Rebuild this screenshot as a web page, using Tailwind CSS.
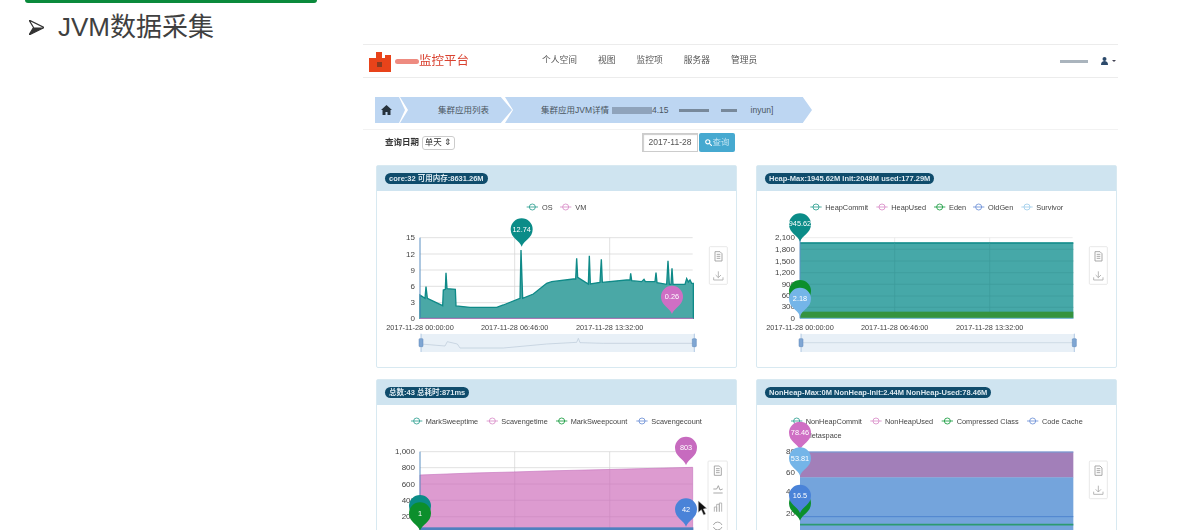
<!DOCTYPE html>
<html lang="zh">
<head>
  <meta charset="UTF-8" />
  <title>JVM数据采集</title>
  <script src="https://cdn.jsdelivr.net/npm/@tailwindcss/browser@4"></script>
</head>
<body class="bg-white h-[530px] overflow-hidden font-['Liberation_Sans','Noto_Sans_CJK_SC',sans-serif]">

  <!-- shared symbols -->
  <svg class="hidden">
    <defs>
      <path id="pin" d="M0 0C-6-18-33-25-33-52A33 33 0 1 1 33-52C33-25 6-18 0 0Z"/>
      <g id="doc" fill="none" stroke="#999" stroke-width="2.5">
        <path d="M-10-14H5L11-8V14H-10Z"/><path d="M-5-6H6M-5 0H6M-5 6H6"/>
      </g>
      <g id="down" fill="none" stroke="#aaa" stroke-width="2.5">
        <path d="M0-14V5M-8-3L0 5 8-3M-14 4V12H14V4"/>
      </g>
      <g id="handle">
        <path d="M0-27V28" stroke="#8fb0d6" stroke-width="2"/>
        <rect x="-6" y="-12" width="12" height="24" rx="2" fill="#7fa6d3" stroke="#5d86b8" stroke-width="1.5"/>
      </g>
    </defs>
  </svg>

  <div class="ml-[25px] w-[292px] h-[3px] rounded-b-full bg-[#0a8a3c]"></div>

  <div class="h-[41px] pt-[7px] flex items-center pl-[29px] text-[#404040]">
    <svg class="w-[15px] h-[15px]" viewBox="0 0 15 15"><path d="M0 0L15 7.5 0 15 4.5 7.5Z" fill="#fff" stroke="#333" stroke-width="1.2"/><path d="M4.5 7.5H15L0 15Z" fill="#333"/></svg>
    <h1 class="ml-[14px] text-[26px] leading-none font-normal">JVM数据采集</h1>
  </div>

  <!-- embedded app screenshot -->
  <div class="ml-[363px] w-[755px] blur-[0.6px]">
    <nav class="h-[34px] border-y border-[#ececec] flex items-center text-[8.75px] text-[#555]">
      <svg class="ml-[6px] w-[22px] h-[22px]" viewBox="0 0 22 22"><path d="M0 8H7V2H13V8H16V5H22V22H0Z" fill="#e8431a"/><rect x="8" y="12" width="5" height="5" fill="#8a3a20"/></svg>
      <span class="ml-[4px] w-[24px] h-[5px] bg-[#ee8b80] rounded-sm"></span>
      <span class="text-[12.5px] text-[#d9412f]">监控平台</span>
      <div class="ml-[73px] flex gap-[21px]">
        <a>个人空间</a><a>视图</a><a>监控项</a><a>服务器</a><a>管理员</a>
      </div>
      <span class="ml-auto w-[28px] h-[3px] bg-[#aab4bd]"></span>
      <svg class="ml-[13px] w-[7px] h-[8px]" viewBox="0 0 7 8"><circle cx="3.5" cy="2" r="2" fill="#2c4a6b"/><path d="M0 8C0 5 1.5 4 3.5 4S7 5 7 8Z" fill="#2c4a6b"/></svg>
      <span class="ml-[4px] mr-[2px] border-x-[2.5px] border-t-[2.5px] border-x-transparent border-t-[#445]"></span>
    </nav>

    <div class="mt-[19px] ml-[12px] h-[26px] flex text-[8.5px] text-[#4a5560]">
      <div class="w-[30px] bg-[#bdd6f2] flex items-center pl-[6px] [clip-path:polygon(0_0,80%_0,100%_50%,80%_100%,0_100%)]">
        <svg class="w-[11px] h-[10px]" viewBox="0 0 11 10"><path d="M5.5 0L11 5H9.5V10H6.5V7H4.5V10H1.5V5H0Z" fill="#26323c"/></svg>
      </div>
      <div class="w-[112px] -ml-[5px] bg-[#bdd6f2] flex items-center pl-[38px] [clip-path:polygon(0_0,90%_0,100%_50%,90%_100%,0_100%,8px_50%)]">集群应用列表</div>
      <div class="w-[307px] -ml-[7px] bg-[#bdd6f2] flex items-center pl-[36px] whitespace-nowrap [clip-path:polygon(0_0,97%_0,100%_50%,97%_100%,0_100%,8px_50%)]">
        集群应用JVM详情
        <span class="ml-[3px] w-[40px] h-[7px] bg-[#8fa3bb]"></span>
        <span>4.15</span>
        <span class="ml-[10px] w-[30px] h-[3px] bg-[#78899b]"></span>
        <span class="ml-[12px] w-[16px] h-[3px] bg-[#78899b]"></span>
        <span class="ml-[14px]">inyun]</span>
      </div>
    </div>

    <div class="mt-[6px] border-t border-[#f2f2f2]"></div>

    <div class="mt-[3px] ml-[22px] h-[19px] flex items-center text-[8.5px] text-[#333]">
      <span class="font-bold">查询日期</span>
      <span class="ml-[3px] h-[14px] w-[33px] border border-[#ccc] rounded-[3px] flex items-center justify-center">单天 ⇕</span>
      <span class="ml-[187px] h-[19px] w-[56px] border border-[#ccc] shadow-[inset_1px_1px_1px_#ccc] flex items-center justify-center text-[#555]">2017-11-28</span>
      <button class="ml-[1px] h-[19px] w-[36px] bg-[#46a9d0] rounded-[2px] text-[#bfe3f2] flex items-center justify-center gap-[1px]">
        <svg class="w-[7px] h-[7px]" viewBox="0 0 8 8" fill="none" stroke="#fff" stroke-width="1.3"><circle cx="3.2" cy="3.2" r="2.4"/><path d="M5 5L8 8"/></svg>查询
      </button>
    </div>

    <div class="mt-[13px] ml-[13px] w-[741px] grid grid-cols-[361px_361px] gap-x-[19px] gap-y-[11px]">

      <!-- core -->
      <section class="border border-[#d8e9f1] rounded-[2px]">
        <header class="h-[25px] bg-[#cfe4f0] flex items-center pl-[8px]">
          <span class="px-[4px] h-[11px] rounded-full bg-[#0f4c6c] text-[#dce9f0] text-[7.5px] font-bold leading-[11px]">core:32 可用内存:8631.26M</span>
        </header>
        <svg class="block w-[359px] h-[176px]" viewBox="21 3 1077 528" font-size="24" fill="#444">
          <circle cx="487" cy="51" r="9" fill="none" stroke="#2a9d8f" stroke-width="2.5"/><path d="M470 51h34" stroke="#2a9d8f" stroke-width="2.5"/><text x="516" y="59" font-size="22">OS</text>
          <circle cx="587" cy="51" r="9" fill="none" stroke="#d88bc8" stroke-width="2.5"/><path d="M570 51h34" stroke="#d88bc8" stroke-width="2.5"/><text x="616" y="59" font-size="22">VM</text>
          <path d="M150 143H968M150 192H968M150 240H968M150 289H968M150 338H968M434 143V385M719 143V385" stroke="#d2d2d2" stroke-width="2"/>
          <g text-anchor="end"><text x="135" y="151">15</text><text x="135" y="200">12</text><text x="135" y="248">9</text><text x="135" y="297">6</text><text x="135" y="346">3</text><text x="135" y="394">0</text></g>
          <path d="M150 315L165 325 168 290 172 325 218 347 220 300 226 298 228 248 231 296 256 298 258 348 300 352 380 352 400 345 450 325 453 180 458 325 490 312 530 280 545 275 610 267 617 267 620 205 623 262 655 282 658 197 661 282 690 277 694 208 697 277 770 270 780 270 782 250 785 272 815 275 822 268 826 275 855 275 858 248 861 278 890 283 894 212 898 283 903 283 906 235 909 283 945 283 950 266 955 276 960 270 965 280 970 280V385H150Z" fill="#4aa8a6" stroke="#0f8a88" stroke-width="4"/>
          <path d="M150 385H970" stroke="#c777c0" stroke-width="3"/><path d="M150 143V385" stroke="#5a8fc2" stroke-width="3"/>
          <g font-size="22" text-anchor="middle"><text x="150" y="420">2017-11-28 00:00:00</text><text x="434" y="420">2017-11-28 06:46:00</text><text x="719" y="420">2017-11-28 13:32:00</text></g>
          <use href="#pin" transform="translate(455 170)" fill="#0b8c88"/><text x="455" y="126" text-anchor="middle" fill="#fff" font-size="22">12.74</text>
          <use href="#pin" transform="translate(906 372)" fill="#cf6fc4"/><text x="906" y="328" text-anchor="middle" fill="#fff" font-size="22">0.26</text>
          <rect x="153" y="432" width="820" height="54" fill="#e8f0f7"/>
          <path d="M153 462L225 468 232 455 262 462 270 474 400 474 530 462 620 457 625 445 630 458 700 460 900 460 970 460" fill="none" stroke="#b9c9d8" stroke-width="2"/>
          <use href="#handle" x="153" y="458"/><use href="#handle" x="973" y="458"/>
          <rect x="1018" y="170" width="54" height="113" rx="3" fill="#fff" stroke="#ddd" stroke-width="2"/>
          <use href="#doc" x="1045" y="199"/><use href="#down" x="1045" y="258"/>
        </svg>
      </section>

      <!-- heap -->
      <section class="border border-[#d8e9f1] rounded-[2px]">
        <header class="h-[25px] bg-[#cfe4f0] flex items-center pl-[8px]">
          <span class="px-[4px] h-[11px] rounded-full bg-[#0f4c6c] text-[#dce9f0] text-[7.5px] font-bold leading-[11px]">Heap-Max:1945.62M Init:2048M used:177.29M</span>
        </header>
        <svg class="block w-[359px] h-[176px]" viewBox="21 3 1077 528" font-size="22" fill="#444">
          <g fill="none" stroke-width="2.5">
            <circle cx="198" cy="51" r="9" stroke="#2a9d8f"/><path d="M181 51h34" stroke="#2a9d8f"/>
            <circle cx="396" cy="51" r="9" stroke="#d88bc8"/><path d="M379 51h34" stroke="#d88bc8"/>
            <circle cx="569" cy="51" r="9" stroke="#149a3c"/><path d="M552 51h34" stroke="#149a3c"/>
            <circle cx="686" cy="51" r="9" stroke="#6b8fd6"/><path d="M669 51h34" stroke="#6b8fd6"/>
            <circle cx="831" cy="51" r="9" stroke="#9dcdea"/><path d="M814 51h34" stroke="#9dcdea"/>
          </g>
          <text x="226" y="59">HeapCommit</text><text x="424" y="59">HeapUsed</text><text x="597" y="59">Eden</text><text x="714" y="59">OldGen</text><text x="859" y="59">Survivor</text>
          <path d="M150 143H968M434 143V158M719 143V158" stroke="#e2e2e2" stroke-width="2"/>
          <g text-anchor="end" font-size="24"><text x="135" y="151">2,100</text><text x="135" y="186">1,800</text><text x="135" y="221">1,500</text><text x="135" y="255">1,200</text><text x="135" y="290">900</text><text x="135" y="325">600</text><text x="135" y="358">300</text><text x="135" y="394">0</text></g>
          <rect x="150" y="158" width="820" height="227" fill="#46a8a8"/>
          <path d="M150 159H970" stroke="#0f8a88" stroke-width="5"/>
          <path d="M150 178H970M150 213H970M150 248H970M150 283H970M150 318H970M150 352H970M434 158V385M719 158V385" stroke="#3d9a9a" stroke-width="2"/>
          <rect x="150" y="365" width="820" height="20" fill="#35933f"/>
          <path d="M150 385H970" stroke="#7cb8e0" stroke-width="3"/><path d="M150 143V385" stroke="#5a8fc2" stroke-width="3"/>
          <g text-anchor="middle"><text x="150" y="420">2017-11-28 00:00:00</text><text x="434" y="420">2017-11-28 06:46:00</text><text x="719" y="420">2017-11-28 13:32:00</text></g>
          <use href="#pin" transform="translate(150 155)" fill="#0b8c88"/><text x="150" y="109" text-anchor="middle" fill="#fff">945.62</text>
          <use href="#pin" transform="translate(150 355)" fill="#0c8f2c"/>
          <use href="#pin" transform="translate(150 378)" fill="#74b5e8"/><text x="150" y="333" text-anchor="middle" fill="#fff">2.18</text>
          <rect x="153" y="432" width="820" height="54" fill="#e8f0f7"/>
          <path d="M153 458H973" stroke="#c3d1de" stroke-width="2"/>
          <use href="#handle" x="153" y="458"/><use href="#handle" x="973" y="458"/>
          <rect x="1018" y="170" width="54" height="113" rx="3" fill="#fff" stroke="#ddd" stroke-width="2"/>
          <use href="#doc" x="1045" y="199"/><use href="#down" x="1045" y="258"/>
        </svg>
      </section>

      <!-- gc -->
      <section class="border border-[#d8e9f1] rounded-[2px]">
        <header class="h-[25px] bg-[#cfe4f0] flex items-center pl-[8px]">
          <span class="px-[4px] h-[11px] rounded-full bg-[#0f4c6c] text-[#dce9f0] text-[7.5px] font-bold leading-[11px]">总数:43 总耗时:871ms</span>
        </header>
        <svg class="block w-[359px] h-[176px]" viewBox="21 90 1077 528" font-size="22" fill="#444">
          <g fill="none" stroke-width="2.5">
            <circle cx="140" cy="138" r="9" stroke="#2a9d8f"/><path d="M123 138h34" stroke="#2a9d8f"/>
            <circle cx="367" cy="138" r="9" stroke="#d88bc8"/><path d="M350 138h34" stroke="#d88bc8"/>
            <circle cx="575" cy="138" r="9" stroke="#149a3c"/><path d="M558 138h34" stroke="#149a3c"/>
            <circle cx="816" cy="138" r="9" stroke="#6b8fd6"/><path d="M799 138h34" stroke="#6b8fd6"/>
          </g>
          <text x="167" y="146">MarkSweeptime</text><text x="394" y="146">Scavengetime</text><text x="602" y="146">MarkSweepcount</text><text x="844" y="146">Scavengecount</text>
          <path d="M150 230H968M150 278H968M434 230V465M719 230V465" stroke="#d2d2d2" stroke-width="2"/>
          <g text-anchor="end" font-size="24"><text x="135" y="238">1,000</text><text x="135" y="286">800</text><text x="135" y="335">600</text><text x="135" y="384">400</text><text x="135" y="433">200</text></g>
          <path d="M150 300L310 294 430 291 525 288 735 283 968 277V465H150Z" fill="#dd9bd0" stroke="#c777c0" stroke-width="2"/>
          <path d="M150 327H968M150 376H968M150 425H968M434 290V465M719 283V465" stroke="#cf8cc2" stroke-width="2"/>
          <rect x="150" y="457" width="820" height="20" fill="#4f80bf"/>
          <path d="M150 230V465" stroke="#5a8fc2" stroke-width="3"/>
          <use href="#pin" transform="translate(948 270)" fill="#c76bbf"/><text x="948" y="226" text-anchor="middle" fill="#fff">803</text>
          <use href="#pin" transform="translate(948 455)" fill="#4a83d8"/><text x="948" y="411" text-anchor="middle" fill="#fff">42</text>
          <use href="#pin" transform="translate(150 445)" fill="#0b8c88"/>
          <use href="#pin" transform="translate(150 467)" fill="#0c8f2c"/><text x="150" y="423" text-anchor="middle" fill="#fff">1</text>
          <rect x="1014" y="258" width="58" height="240" rx="3" fill="#fff" stroke="#ddd" stroke-width="2"/>
          <use href="#doc" x="1043" y="287"/>
          <path d="M1030 342H1040L1045 332 1050 345 1058 342M1030 354H1058" fill="none" stroke="#999" stroke-width="2.5"/>
          <path d="M1033 410V396H1040V410M1040 410V388H1048V410M1048 410V384H1055V410" fill="none" stroke="#aaa" stroke-width="2.5"/>
          <path d="M1030 450A14 14 0 0 1 1056 450M1056 456A14 14 0 0 1 1030 456" fill="none" stroke="#999" stroke-width="2.5"/>
          <path d="M985 378V412L994 404 1001 420 1007 417 1000 402 1010 400Z" fill="#111" stroke="#bbb" stroke-width="1.5"/>
        </svg>
      </section>

      <!-- non-heap -->
      <section class="border border-[#d8e9f1] rounded-[2px]">
        <header class="h-[25px] bg-[#cfe4f0] flex items-center pl-[8px]">
          <span class="px-[4px] h-[11px] rounded-full bg-[#0f4c6c] text-[#dce9f0] text-[7.5px] font-bold leading-[11px]">NonHeap-Max:0M NonHeap-Init:2.44M NonHeap-Used:78.46M</span>
        </header>
        <svg class="block w-[359px] h-[176px]" viewBox="21 90 1077 528" font-size="22" fill="#444">
          <g fill="none" stroke-width="2.5">
            <circle cx="140" cy="138" r="9" stroke="#2a9d8f"/><path d="M123 138h34" stroke="#2a9d8f"/>
            <circle cx="378" cy="138" r="9" stroke="#d88bc8"/><path d="M361 138h34" stroke="#d88bc8"/>
            <circle cx="592" cy="138" r="9" stroke="#149a3c"/><path d="M575 138h34" stroke="#149a3c"/>
            <circle cx="848" cy="138" r="9" stroke="#6b8fd6"/><path d="M831 138h34" stroke="#6b8fd6"/>
          </g>
          <text x="167" y="146">NonHeapCommit</text><text x="405" y="146">NonHeapUsed</text><text x="620" y="146">Compressed Class</text><text x="876" y="146">Code Cache</text>
          <text x="167" y="188">Metaspace</text>
          <g text-anchor="end" font-size="24"><text x="135" y="238">80</text><text x="135" y="300">60</text><text x="135" y="358">40</text><text x="135" y="423">20</text></g>
          <rect x="150" y="230" width="820" height="78" fill="#a27fb9"/>
          <rect x="150" y="307" width="820" height="170" fill="#74a4dc"/>
          <path d="M150 231H970" stroke="#6f9fd6" stroke-width="3"/>
          <path d="M150 425H970" stroke="#4f84cf" stroke-width="3"/>
          <path d="M150 449H970" stroke="#2c9a70" stroke-width="5"/>
          <use href="#pin" transform="translate(150 225)" fill="#cf6fc4"/><text x="150" y="181" text-anchor="middle" fill="#fff">78.46</text>
          <use href="#pin" transform="translate(150 437)" fill="#0c8f2c"/>
          <use href="#pin" transform="translate(150 302)" fill="#74b5e8"/><text x="150" y="258" text-anchor="middle" fill="#fff">53.81</text>
          <use href="#pin" transform="translate(150 414)" fill="#4a83d8"/><text x="150" y="370" text-anchor="middle" fill="#fff">16.5</text>
          <rect x="1018" y="258" width="54" height="113" rx="3" fill="#fff" stroke="#ddd" stroke-width="2"/>
          <use href="#doc" x="1045" y="287"/><use href="#down" x="1045" y="346"/>
        </svg>
      </section>

    </div>
  </div>

</body>
</html>
